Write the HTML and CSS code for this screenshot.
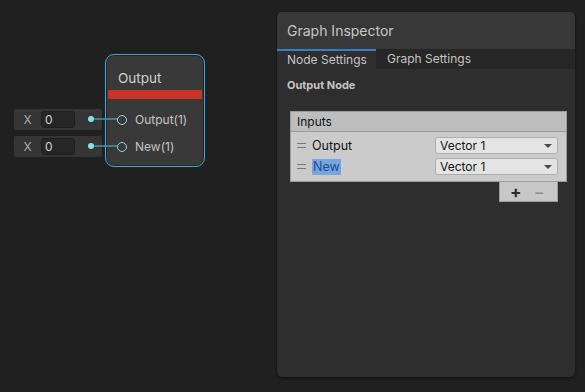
FILE: index.html
```html
<!DOCTYPE html>
<html lang="en">
<head>
  <meta charset="UTF-8" />
  <title>Shader Graph</title>
  <link rel="stylesheet" href="styles.css">
</head>
<body>
  <div class="canvas">
    <!-- wires -->
    <svg class="wires" width="585" height="392">
      <line x1="91" y1="119" x2="118" y2="119" stroke="#4f939a" stroke-width="1.5" />
      <line x1="91" y1="146" x2="118" y2="146" stroke="#4f939a" stroke-width="1.5" />
      <circle cx="91" cy="119" r="3" fill="#86e0ea" />
      <circle cx="91" cy="146" r="3" fill="#86e0ea" />
    </svg>

    <!-- inline inputs -->
    <div class="inline-input in-1">
      <span class="axis">X</span>
      <span class="field">0</span>
    </div>
    <div class="inline-input in-2">
      <span class="axis">X</span>
      <span class="field">0</span>
    </div>

    <!-- Output node -->
    <div class="node">
      <div class="node-title">Output</div>
      <div class="node-bar"></div>
      <div class="ports">
        <div class="port"><span class="port-dot"></span>Output(1)</div>
        <div class="port"><span class="port-dot"></span>New(1)</div>
      </div>
    </div>

    <!-- Graph Inspector -->
    <div class="inspector">
      <div class="insp-title">Graph Inspector</div>
      <div class="tabs">
        <div class="tab active">Node Settings</div>
        <div class="tab">Graph Settings</div>
      </div>
      <div class="insp-body">
        <div class="section-label">Output Node</div>
        <div class="list">
          <div class="list-header">Inputs</div>
          <div class="list-body">
            <div class="list-row">
              <span class="handle"></span>
              <span class="row-name">Output</span>
              <div class="dropdown">Vector 1<span class="arrow"></span></div>
            </div>
            <div class="list-row">
              <span class="handle"></span>
              <span class="row-name selected">New</span>
              <div class="dropdown">Vector 1<span class="arrow"></span></div>
            </div>
          </div>
          <div class="list-footer">
            <span class="plus">+</span>
            <span class="minus">&minus;</span>
          </div>
        </div>
      </div>
    </div>
  </div>
</body>
</html>
```

FILE: styles.css
```css
body { margin: 0; background: #202020; font-family: Inter, "Noto Sans", sans-serif; }
.canvas { position: relative; width: 585px; height: 392px; overflow: hidden; }
.wires { position: absolute; left: 0; top: 0; z-index: 2; }

/* inline inputs */
.inline-input {
  position: absolute;
  left: 14px;
  width: 88px;
  height: 21px;
  background: #353535;
  border-radius: 2px;
  display: flex;
  align-items: center;
}
.in-1 { top: 109px; }
.in-2 { top: 136px; }
.axis { color: #a8a8a8; font-size: 12px; width: 27px; text-align: center; }
.field {
  width: 34px;
  height: 17px;
  box-sizing: border-box;
  background: #262626;
  border: 1px solid #1e1e1e;
  border-radius: 3px;
  color: #d2d2d2;
  font-size: 12px;
  line-height: 15px;
  padding-left: 3px;
}

/* node */
.node {
  position: absolute;
  left: 105px;
  top: 54px;
  width: 100px;
  height: 113px;
  box-sizing: border-box;
  border: 1.5px solid #3ea6de;
  border-radius: 9px;
  background: #393939;
  box-shadow: inset 0 0 0 1px #242424;
  padding: 0 2px;
}
.node-title { height: 35px; line-height: 46px; color: #cfcfcf; font-size: 13.5px; padding-left: 10px; }
.node-bar { height: 9px; background: #c83326; }
.ports { padding-top: 7px; }
.port { height: 27px; display: flex; align-items: center; color: #c4c4c4; font-size: 12px; }
.port-dot {
  width: 10px;
  height: 10px;
  box-sizing: border-box;
  border: 1.5px solid #86d8e2;
  border-radius: 50%;
  margin: 0 8px 0 9px;
  background: #393939;
  position: relative;
  z-index: 3;
}

/* inspector */
.inspector {
  position: absolute;
  left: 277px;
  top: 12px;
  width: 298px;
  height: 365px;
  background: #2e2e2e;
  border-radius: 5px;
  box-shadow: 0 1px 3px rgba(0, 0, 0, 0.6);
  overflow: hidden;
}
.insp-title { height: 37px; line-height: 37px; background: #383838; color: #c6c6c6; font-size: 14px; padding-left: 10px; }
.tabs { display: flex; height: 20px; background: #262626; }
.tab { color: #c4c4c4; font-size: 12px; line-height: 19px; padding: 0 11px; white-space: nowrap; }
.tab.active { background: #2e2e2e; border-top: 2px solid #3a7bc2; line-height: 17px; width: 79px; padding: 0 10px; }
.insp-body { padding: 10px 8px 0 13px; }
.section-label { color: #c4c4c4; font-size: 11px; font-weight: bold; margin-left: -3px; height: 12px; line-height: 12px; }

.list { margin-top: 20px; }
.list-header {
  height: 19px;
  line-height: 19px;
  background: #bdbdbd;
  border: 1px solid #9c9c9c;
  color: #111;
  font-size: 12px;
  padding-left: 6px;
}
.list-body {
  background: #cbcbcb;
  border: 1px solid #9c9c9c;
  border-top: none;
  padding: 3px 0 4px;
}
.list-row { display: flex; align-items: center; height: 21px; }
.handle {
  width: 9px;
  height: 3px;
  border-top: 1px solid #7a7a7a;
  border-bottom: 1px solid #7a7a7a;
  margin: 0 6px 0 6px;
}
.row-name { color: #141414; font-size: 12.5px; line-height: 16px; flex: 1; }
.row-name.selected { flex: none; background: #78a5de; color: #1b4c94; padding: 0 1px; margin-right: auto; }
.dropdown {
  position: relative;
  width: 123px;
  height: 17px;
  box-sizing: border-box;
  background: #e4e4e4;
  border: 1px solid #adadad;
  border-radius: 3px;
  color: #141414;
  font-size: 12px;
  line-height: 15px;
  padding-left: 4px;
  margin-right: 8px;
}
.arrow {
  position: absolute;
  right: 5px;
  top: 6px;
  border-left: 4px solid transparent;
  border-right: 4px solid transparent;
  border-top: 4px solid #4a4a4a;
}
.list-footer {
  margin-left: 209px;
  width: 57px;
  height: 19px;
  background: #c7c7c7;
  border: 1px solid #9c9c9c;
  border-top: none;
  display: flex;
  align-items: center;
  font-size: 17px;
}
.plus { color: #2c2c2c; margin-left: 10px; font-weight: bold; }
.minus { color: #8c8c8c; margin-left: 12px; }
```
